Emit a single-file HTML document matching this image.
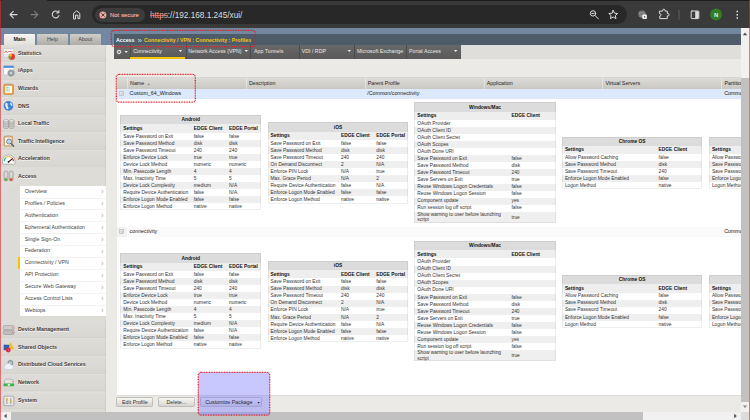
<!DOCTYPE html><html><head><meta charset="utf-8"><title>BIG-IP - Connectivity Profiles</title><style>
*{box-sizing:border-box;margin:0;padding:0}
html,body{width:750px;height:420px;overflow:hidden;background:#ebeae6}
body{font-family:"Liberation Sans",sans-serif;font-size:5.3px;color:#222;position:relative}
.abs{position:absolute}
#root{position:absolute;left:0;top:0;width:750px;height:420px;}
#toolbar{left:0;top:0;width:750px;height:28.3px;background:#3a3a3b}
#topstrip{left:46.5px;top:0;width:703.5px;height:1.2px;background:#1d1e20}
#topstrip0{left:0;top:0;width:2px;height:1.2px;background:#1d1e20}
#pill{left:92px;top:4.9px;width:535px;height:19.4px;border-radius:9.7px;background:#282828}
#chip{left:95.2px;top:8px;width:49.5px;height:14px;border-radius:7px;background:#3c3c3c}
#chiptxt{left:110px;top:12.3px;font-size:5.95px;line-height:7px;color:#f0a59c;-webkit-text-stroke:0.15px #f0a59c;white-space:nowrap}
#url{left:150px;top:10.4px;font-size:8.23px;line-height:11px;color:#dedede;white-space:nowrap}
#url s{color:#e79b93;text-decoration:line-through;text-decoration-color:#dc6f66;text-decoration-thickness:0.7px}
#band1{left:0;top:28.3px;width:741px;height:5.7px;background:#73889f}
#band2{left:113.6px;top:34px;width:627.4px;height:11px;background:#4e5b69}
#bandL{left:0;top:34px;width:114px;height:11px;background:#7188a4}
.tab{top:34.3px;height:10.7px;font-size:5.3px;line-height:10.4px;text-align:center;color:#444;border-radius:1px 1px 0 0}
#tabMain{left:4px;width:31px;background:linear-gradient(#f3f2ef,#e2e1dc);border-top:1px solid #fafaf8;line-height:9.6px;font-weight:bold;color:#222}
#tabHelp{left:37.1px;width:30.6px;background:linear-gradient(#cfcec9,#adaca7)}
#tabAbout{left:70px;width:30.5px;background:linear-gradient(#cfcec9,#adaca7)}
#sidebar{left:0;top:45px;width:105.6px;height:367px;background:#dcdbd6}
#sbedge{left:105px;top:45px;width:1px;height:367px;background:rgba(0,0,0,0.05)}
.sitem{left:0;width:105.6px;height:17.6px;background:linear-gradient(#e1e0dc 0,#dedcd8 8%,#d8d7d2 90%,#d3d2cd 100%)}
.sitem span{position:absolute;left:18px;top:5.4px;font-weight:bold;font-size:5.3px;line-height:7px;color:#404040;white-space:nowrap;text-shadow:0 0.5px 0 rgba(255,255,255,.8)}
.sicon{position:absolute;left:3.4px;top:3px;width:11.6px;height:11.6px;overflow:visible}
#submenu{left:20.2px;top:185.9px;width:85.4px;height:130.2px;background:#fff}
.sub{position:absolute;left:0;width:85.4px;height:12.7px;border-bottom:1px solid #f3f3f3;font-size:5.3px;line-height:11.8px;color:#444;padding-left:4.5px;white-space:nowrap}
.sub i{position:absolute;right:2.2px;top:0.3px;font-style:normal;color:#a2a2a2;font-size:6.8px}
#nav{left:113.6px;top:45px;width:347.4px;height:13.8px;background:linear-gradient(#686868,#595959)}
#navrest{left:461px;top:45px;width:280px;height:13.8px;background:#dfdedb}
.nv{position:absolute;top:0;height:13.8px;font-size:5.27px;line-height:12.6px;color:#e9e9e9;white-space:nowrap}
.nvd{position:absolute;top:0;width:0.8px;height:13.8px;background:#4c4c4c}
.nva{position:absolute;top:4.7px;width:3.8px;height:2.3px;background:#f0f0f0;clip-path:polygon(0 0,100% 0,50% 100%)}
#crumb{left:116px;top:36.7px;font-size:5.27px;line-height:7px;font-weight:bold;color:#fff;white-space:nowrap}
#crumb b{color:#f3c70f}
.red{overflow:visible}
#panel{left:116.7px;top:77px;width:624.3px;height:317.7px;background:#fff}
#thead{left:117.3px;top:77px;width:623.7px;height:11.8px;background:linear-gradient(#dcdbd7,#c8c7c2);border-top:1px solid #d7d6d2}
.th{position:absolute;top:0;height:11.3px;font-size:5.3px;line-height:11.4px;color:#222;padding-left:2.1px;border-left:1px solid rgba(255,255,255,0.4);white-space:nowrap}
#row1{left:117.3px;top:88.8px;width:623.7px;height:10px;background:#dbe9fb}
#row2{left:117.3px;top:227px;width:623.7px;height:9.6px;background:#fafafa}
.rt{position:absolute;font-size:5.3px;line-height:7px;white-space:nowrap;color:#222}
.cb{position:absolute;width:4.3px;height:4.3px;border:0.5px solid #a6a6a6;box-shadow:inset 0.6px 0.6px 0 #fff;background:linear-gradient(#fdfdfd,#d9d9d9);border-radius:0.5px}
table.t{position:absolute;border-collapse:collapse;font-size:4.85px;line-height:5.4px;color:#333;table-layout:fixed}
table.t td,table.t th{padding:0 0 0 2.9px;text-align:left;white-space:nowrap;overflow:hidden;vertical-align:middle}
table.t tr.ti th{height:9.3px;background:#dcdcdc;text-align:center;color:#111;padding:0.8px 0 0 0}
table.t tr.hd th{height:8.4px;background:#eeeeee;color:#111}
table.t tr.r td{height:7.05px}
table.t tr.e td{background:#efefef}
table.t tr.r2 td{height:11.1px;white-space:normal;line-height:5.4px}
.tb{border:1px solid rgba(0,0,0,0.065)}
.btn{position:absolute;top:397.3px;height:10px;border:0.5px solid #bfbeb9;border-radius:1.2px;background:linear-gradient(#f6f6f4,#d6d5d1);font-size:5.3px;line-height:9px;color:#333;text-align:center;white-space:nowrap}
#hl{left:198px;top:372.3px;width:72px;height:43.4px;background:rgba(128,128,255,0.43)}
#hscroll{left:0;top:412px;width:741px;height:8px;background:#f1f1f1}
#hthumb{left:11px;top:412px;width:631.5px;height:8px;background:#c1c1c1}
#vscroll{left:740.6px;top:28.3px;width:8.6px;height:383.7px;background:#f1f1f1}
#vthumb{left:741px;top:78px;width:8px;height:324px;background:#c1c1c1}
#corner{left:740.6px;top:412px;width:8.6px;height:8px;background:#dcdcdc}
#redL{left:0;top:0;width:1.2px;height:420px;background:rgba(215,40,50,0.6)}
#redR{left:749px;top:0;width:1px;height:420px;background:rgba(215,40,50,0.6)}
</style></head><body><div id="root">
<div id="toolbar" class="abs"></div><div id="topstrip" class="abs"></div><div id="topstrip0" class="abs"></div>
<div id="pill" class="abs"></div><div id="chip" class="abs"></div>
<div id="chiptxt" class="abs">Not secure</div>
<div id="url" class="abs"><s>https</s>://192.168.1.245/xui/</div>
<svg class="abs" style="left:0;top:0" width="750" height="28" viewBox="0 0 750 28" fill="none" stroke-linecap="round" stroke-linejoin="round">
<g stroke="#dcdcdc" stroke-width="1.1">
<path d="M17 14.6H10.2M13.3 11.3L10 14.6L13.3 17.9"/>
<path d="M58.4 12.4A3.4 3.4 0 1 0 58.9 15.6"/><path d="M58.9 10.6V12.9H56.6" stroke-width="1"/>
<path d="M73.6 18.6V13.4L76.7 10.8L79.8 13.4V18.6H77.9V15.2H75.5V18.6Z" stroke-width="1"/>
<circle cx="593" cy="13.4" r="2.7" stroke-width="1"/><path d="M595 15.5L598.4 18.9M591.8 13.4H594.2" stroke-width="1"/>
<path d="M613.2 10.4L614.5 13.2L617.6 13.5L615.3 15.6L616 18.6L613.2 17L610.4 18.6L611.1 15.6L608.8 13.5L611.9 13.2Z" stroke-width="1"/>
<path d="M659.8 11.1H662.7V10.3A1.15 1.15 0 0 1 665 10.3V11.1H667.3V13.6H668A1.15 1.15 0 0 1 668 15.9H667.3V18.6H659.8V16A1.2 1.2 0 0 0 659.8 13.6Z" stroke-width="1" stroke-linejoin="miter"/>
<rect x="691.2" y="11" width="7.6" height="7.6" rx="0.8" stroke-width="1"/>
</g>
<path d="M31 14.6H37.8M34.5 11.3L37.8 14.6L34.5 17.9" stroke="#7d7d7d" stroke-width="1.1"/>
<rect x="695.2" y="11.3" width="3.3" height="7" fill="#dcdcdc"/>
<circle cx="102.9" cy="14.9" r="3.5" fill="#f0a59c"/>
<path d="M101.7 13.7L104.3 16.3M104.3 13.7L101.7 16.3" stroke="#3c3c3c" stroke-width="0.9"/>
<circle cx="642" cy="14" r="3.6" fill="#8a8a8a"/><path d="M640 12.5C641 11 643 11 644 12.5M639.6 15C641 13.6 642.6 13.6 644 15" stroke="#5a5a5a" stroke-width="0.7"/>
<rect x="642.3" y="14.6" width="4.6" height="4.4" rx="0.9" fill="#f2f2f2"/><circle cx="644.6" cy="16.9" r="0.8" fill="#555"/>
<path d="M679 10.2V19.4" stroke="#6a6a6a" stroke-width="0.8"/>
<circle cx="716" cy="14.6" r="6" fill="#347d24"/>
<g fill="#dcdcdc"><rect x="736.5" y="10.7" width="1.5" height="1.6"/><rect x="736.5" y="14" width="1.5" height="1.6"/><rect x="736.5" y="17.2" width="1.5" height="1.6"/></g>
<text x="716" y="16.7" text-anchor="middle" font-family="Liberation Sans, sans-serif" font-weight="bold" font-size="5.8" fill="#e4efe0">N</text>
</svg>
<div id="band1" class="abs"></div><div id="bandL" class="abs"></div><div id="band2" class="abs"></div>
<div id="tabMain" class="abs tab">Main</div><div id="tabHelp" class="abs tab">Help</div><div id="tabAbout" class="abs tab">About</div>
<div id="sidebar" class="abs"></div>
<div class="abs sitem" style="top:44.50px"><svg class="sicon" viewBox="0 0 10.6 10.6"><rect x="0.4" y="0.6" width="9.4" height="8" rx="0.8" fill="#fbfbfb" stroke="#b5b5b5" stroke-width="0.5"/><path d="M1.4 4.6L2.6 2.4L3.6 4.2L5 3.2L8.8 3.4" stroke="#d33" stroke-width="0.6" fill="none"/><path d="M1.2 6.2H6M1.2 7.4H5" stroke="#9bd" stroke-width="0.4"/><circle cx="8" cy="7.9" r="2.9" fill="#e8312c"/><path d="M8 7.9L8 5A2.9 2.9 0 0 0 5.2 7.2Z" fill="#f2c21a"/><path d="M8 7.9L5.2 7.2A2.9 2.9 0 0 0 6.6 10.4Z" fill="#69b42e"/></svg><span>Statistics</span></div>
<div class="abs sitem" style="top:62.07px"><svg class="sicon" viewBox="0 0 10.6 10.6"><rect x="0.5" y="0.7" width="9.4" height="8.4" rx="0.8" fill="#fdfdfd" stroke="#a4a9b6" stroke-width="0.5"/><rect x="0.5" y="0.7" width="9.4" height="1.9" fill="#4a8fd8"/><circle cx="7.3" cy="7.3" r="2.9" fill="#9aa2a8" stroke="#868e94" stroke-width="0.8" stroke-dasharray="1 0.6"/><circle cx="7.3" cy="7.3" r="1" fill="#dfe3e6"/></svg><span>iApps</span></div>
<div class="abs sitem" style="top:79.64px"><svg class="sicon" viewBox="0 0 10.6 10.6"><rect x="0.6" y="1.2" width="9" height="9.2" rx="1.2" fill="#e9a14a" stroke="#c47d27" stroke-width="0.5"/><rect x="2" y="2.6" width="6.2" height="6.6" fill="#fbfbf6"/><rect x="3.4" y="0.4" width="3.4" height="1.8" rx="0.5" fill="#aaa"/><path d="M3 4H5M3 5.6H5M3 7.2H5" stroke="#5a5" stroke-width="0.6"/><path d="M5.8 3.4V8.4" stroke="#bbb" stroke-width="0.4"/></svg><span>Wizards</span></div>
<div class="abs sitem" style="top:97.21px"><svg class="sicon" viewBox="0 0 10.6 10.6"><circle cx="5" cy="5.4" r="4.4" fill="#3f84d6"/><path d="M2.4 3C3.8 2 4.8 3.2 4.2 4.6C3.6 6 5.2 6 5 7.6C4.8 9 3.4 8.8 3 7.4C2.6 6 1.4 5.6 2.4 3Z" fill="#e9f1fb"/><path d="M6.4 2.2C7.8 2.4 8.8 3.8 8.6 5.2C7.6 5.4 6.6 4.6 6.4 2.2Z" fill="#e9f1fb"/></svg><span>DNS</span></div>
<div class="abs sitem" style="top:114.78px"><svg class="sicon" viewBox="0 0 10.6 10.6"><g stroke="#8e8d89" stroke-width="0.45"><path d="M0.5 2.6V8.6C0.5 10 5.1 10 5.1 8.6V2.6" fill="#cfcecb"/><ellipse cx="2.8" cy="2.6" rx="2.3" ry="1.2" fill="#e6e5e2"/><path d="M5.5 2.6V8.6C5.5 10 10.1 10 10.1 8.6V2.6" fill="#cfcecb"/><ellipse cx="7.8" cy="2.6" rx="2.3" ry="1.2" fill="#e6e5e2"/><path d="M0.5 4.8C0.5 6 5.1 6 5.1 4.8M0.5 6.8C0.5 8 5.1 8 5.1 6.8M5.5 4.8C5.5 6 10.1 6 10.1 4.8M5.5 6.8C5.5 8 10.1 8 10.1 6.8" fill="none"/></g></svg><span>Local Traffic</span></div>
<div class="abs sitem" style="top:132.35px"><svg class="sicon" viewBox="0 0 10.6 10.6"><rect x="0.8" y="1" width="8" height="9.2" rx="0.9" fill="#e0a565" stroke="#c98a48" stroke-width="0.4"/><rect x="1.8" y="2.2" width="6" height="7.2" fill="#fbf8f2"/><rect x="3.2" y="0.3" width="3.2" height="1.7" rx="0.5" fill="#b9b6b0"/><circle cx="5.6" cy="6" r="2.3" fill="#bcd6f0" stroke="#5f6f86" stroke-width="0.7"/><path d="M7.3 7.8L9.8 10.3" stroke="#4a5a75" stroke-width="1.1" stroke-linecap="round"/></svg><span>Traffic Intelligence</span></div>
<div class="abs sitem" style="top:149.92px"><svg class="sicon" viewBox="0 0 10.6 10.6"><path d="M-0.4 7.4A5.7 5.7 0 0 1 11 7.4V9.4Q11 10.2 10.2 10.2H0.4Q-0.4 10.2 -0.4 9.4Z" fill="#fbfbfa" stroke="#8f8e8a" stroke-width="0.55"/><path d="M1.2 7.6A4.2 4.2 0 0 1 2.6 4.4" stroke="#35b58a" stroke-width="1.1" fill="none"/><path d="M2.9 4.1A4.2 4.2 0 0 1 5.3 3.2" stroke="#b7cf35" stroke-width="1.1" fill="none"/><path d="M5.6 3.2A4.2 4.2 0 0 1 7.9 4.2" stroke="#f2b21d" stroke-width="1.1" fill="none"/><path d="M8.2 4.5A4.2 4.2 0 0 1 9.5 7.6" stroke="#e3352b" stroke-width="1.1" fill="none"/><path d="M4.9 8.2L8.2 5.6" stroke="#1d1d1d" stroke-width="0.95" stroke-linecap="round"/><circle cx="5" cy="8.1" r="0.8" fill="#1d1d1d"/></svg><span>Acceleration</span></div>
<div class="abs sitem" style="top:167.49px;background:#dddcd7;height:18.5px"><svg class="sicon" viewBox="0 0 10.6 10.6"><rect x="0.8" y="0.8" width="3.7" height="9.2" rx="1.7" fill="#cbcac6" stroke="#8f8e8a" stroke-width="0.45"/><rect x="5.6" y="0.8" width="3.7" height="9.2" rx="1.7" fill="#cbcac6" stroke="#8f8e8a" stroke-width="0.45"/><circle cx="2.65" cy="8.7" r="1.4" fill="#55b648"/><circle cx="7.45" cy="8.7" r="1.4" fill="#e4554a"/><rect x="2" y="2.2" width="1.3" height="4" rx="0.6" fill="#e3e2df"/><rect x="6.8" y="2.2" width="1.3" height="4" rx="0.6" fill="#e3e2df"/></svg><span>Access</span></div>
<div class="abs sitem" style="top:320.70px"><svg class="sicon" viewBox="0 0 10.6 10.6"><rect x="0.4" y="1.4" width="9.8" height="3.9" rx="1.1" fill="#cfcdc9" stroke="#8f8e8a" stroke-width="0.45"/><rect x="0.4" y="5.7" width="9.8" height="3.9" rx="1.1" fill="#bfbdb9" stroke="#8f8e8a" stroke-width="0.45"/><circle cx="8.7" cy="3.4" r="0.5" fill="#e55"/><circle cx="8.7" cy="7.7" r="0.5" fill="#e55"/></svg><span>Device Management</span></div>
<div class="abs sitem" style="top:338.40px"><svg class="sicon" viewBox="0 0 10.6 10.6"><path d="M7 1L10.2 7.6H3.8Z" fill="#f0bf2a"/><rect x="0.6" y="3.4" width="5" height="5" fill="#2f5fb3"/><circle cx="4.8" cy="8.2" r="2.2" fill="#e0263a"/><circle cx="4.8" cy="8.2" r="0.6" fill="#f6c"/></svg><span>Shared Objects</span></div>
<div class="abs sitem" style="top:356.10px"><svg class="sicon" viewBox="0 0 10.6 10.6"><circle cx="6.8" cy="3.6" r="2.6" fill="#8a9aa0"/><circle cx="6.8" cy="3.6" r="1.6" fill="#b9c6c8"/><path d="M2.6 9.6A2.2 2.2 0 0 1 2.6 5.4A2.8 2.8 0 0 1 7.6 5.6A2 2 0 0 1 8 9.6Z" fill="#eef1f8" stroke="#b9bfd0" stroke-width="0.4"/></svg><span>Distributed Cloud Services</span></div>
<div class="abs sitem" style="top:373.80px"><svg class="sicon" viewBox="0 0 10.6 10.6"><path d="M1.2 3.4C1.2 1.4 9.4 1.4 9.4 3.4V6.6H1.2Z" fill="#e4e3e0" stroke="#8f8e8a" stroke-width="0.45"/><rect x="0.3" y="6" width="10" height="2.4" rx="1.1" fill="#3fb44a"/><rect x="4.3" y="6.4" width="2" height="1.6" fill="#f4f4f4"/><circle cx="8.6" cy="4.2" r="0.45" fill="#e33"/></svg><span>Network</span></div>
<div class="abs sitem" style="top:391.50px"><svg class="sicon" viewBox="0 0 10.6 10.6"><rect x="0.6" y="1" width="9.4" height="8.8" rx="1.3" fill="#d9d8d4" stroke="#8f8e8a" stroke-width="0.5"/><rect x="1.5" y="1.9" width="7.6" height="7" rx="0.6" fill="#eceae6"/><path d="M3.5 2.8V8.2M7.1 2.8V8.2" stroke="#6d6d6d" stroke-width="0.6"/><rect x="2.7" y="3.2" width="1.6" height="1.7" fill="#e0b83a"/><rect x="6.3" y="4.8" width="1.6" height="1.7" fill="#e0b83a"/></svg><span>System</span></div>
<div id="sbedge" class="abs"></div>
<div id="submenu" class="abs">
<div class="sub" style="top:0.00px">Overview<i>&#8250;</i></div>
<div class="sub" style="top:11.92px">Profiles / Policies<i>&#8250;</i></div>
<div class="sub" style="top:23.84px">Authentication<i>&#8250;</i></div>
<div class="sub" style="top:35.76px">Ephemeral Authentication<i>&#8250;</i></div>
<div class="sub" style="top:47.68px">Single Sign-On<i>&#8250;</i></div>
<div class="sub" style="top:59.60px">Federation<i>&#8250;</i></div>
<div class="sub" style="top:71.52px"><b style="position:absolute;left:-2.4px;top:-0.4px;width:2.4px;height:12px;background:#f5c400"></b>Connectivity / VPN<i>&#8250;</i></div>
<div class="sub" style="top:83.44px">API Protection<i>&#8250;</i></div>
<div class="sub" style="top:95.36px">Secure Web Gateway<i>&#8250;</i></div>
<div class="sub" style="top:107.28px">Access Control Lists<i>&#8250;</i></div>
<div class="sub" style="top:119.20px"><u style="position:absolute;left:0;right:0;bottom:-2.3px;height:3px;background:#dcdbd6"></u>Webtops<i>&#8250;</i></div>
</div>
<div id="navrest" class="abs"></div><div id="nav" class="abs">
<svg style="position:absolute;left:2.4px;top:3.7px" width="6" height="6" viewBox="0 0 6 6"><circle cx="3" cy="3" r="1.7" fill="none" stroke="#e6e6e6" stroke-width="1.3" stroke-dasharray="0.9 0.45"/><circle cx="3" cy="3" r="1.5" fill="none" stroke="#e6e6e6" stroke-width="0.8"/></svg>
<div class="nva" style="left:10.9px;width:3.3px;height:2.1px;top:6px"></div>
<div class="nvd" style="left:16.2px"></div>
<div class="nv" style="left:19.7px">Connectivity</div>
<div class="nva" style="left:64.9px"></div>
<div class="nvd" style="left:72.4px"></div>
<div class="nv" style="left:74.7px">Network Access (VPN)</div>
<div class="nva" style="left:130.8px"></div>
<div class="nvd" style="left:136.4px"></div>
<div class="nv" style="left:140.4px">App Tunnels</div>
<div class="nvd" style="left:185.1px"></div>
<div class="nv" style="left:188.1px">VDI / RDP</div>
<div class="nva" style="left:233.8px"></div>
<div class="nvd" style="left:240.0px"></div>
<div class="nv" style="left:243.4px">Microsoft Exchange</div>
<div class="nvd" style="left:292.1px"></div>
<div class="nv" style="left:295.4px">Portal Access</div>
<div class="nva" style="left:340.2px"></div>
<div style="position:absolute;left:16.7px;top:11.5px;width:54.7px;height:2.3px;background:#f5c400"></div>
</div>
<div id="crumb" class="abs">Access<span style="color:#d5dbe2;position:absolute;left:21.6px;font-size:8px;top:0.2px;font-weight:normal">&#187;</span><b style="position:absolute;left:28px">Connectivity / VPN : Connectivity : Profiles</b></div>
<div id="panel" class="abs"></div><div class="abs" style="left:116.7px;top:394.7px;width:624.3px;height:1.3px;background:#dddcd8"></div>
<div id="thead" class="abs">
<div class="th" style="left:0.0px;width:9.7px;overflow:hidden;border-left:none"></div>
<div class="th" style="left:9.7px;width:118.8px;overflow:hidden">Name <span style="font-size:3.2px;color:#777;position:relative;top:-0.5px;left:1.2px">&#9650;</span></div>
<div class="th" style="left:128.5px;width:118.8px;overflow:hidden">Description</div>
<div class="th" style="left:247.3px;width:119.0px;overflow:hidden">Parent Profile</div>
<div class="th" style="left:366.3px;width:118.8px;overflow:hidden">Application</div>
<div class="th" style="left:485.1px;width:119.0px;overflow:hidden">Virtual Servers</div>
<div class="th" style="left:604.1px;width:19.6px;overflow:hidden">Partition / Path</div>
</div>
<div id="row1" class="abs"></div><div id="row2" class="abs"><div style="position:absolute;left:0;top:0;width:9.7px;height:9.6px;background:#f2f2f2"></div></div>
<svg class="abs" style="left:119.3px;top:91.2px" width="4.8" height="4.8" viewBox="0 0 4.8 4.8"><rect x="0" y="0" width="4.8" height="4.8" rx="0.7" fill="#bcbcbc"/><rect x="0.7" y="0.7" width="3.2" height="3.2" rx="0.3" fill="#ececec"/><rect x="1.6" y="1.6" width="2.4" height="2.4" fill="#d4d4d4"/></svg>
<svg class="abs" style="left:119.3px;top:229.4px" width="4.8" height="4.8" viewBox="0 0 4.8 4.8"><rect x="0" y="0" width="4.8" height="4.8" rx="0.7" fill="#bcbcbc"/><rect x="0.7" y="0.7" width="3.2" height="3.2" rx="0.3" fill="#ececec"/><rect x="1.6" y="1.6" width="2.4" height="2.4" fill="#d4d4d4"/></svg>
<div class="rt" style="left:129.6px;top:90px">Custom_64_Windows</div>
<div class="rt" style="left:367.3px;top:90px">/Common/connectivity</div>
<div class="rt" style="left:724.2px;top:90px;width:16.6px;overflow:hidden">Common</div>
<div class="rt" style="left:129.6px;top:228.3px">connectivity</div>
<div class="rt" style="left:724.2px;top:228.3px;width:16.6px;overflow:hidden">Common</div>
<table class="t" style="left:120.4px;top:115.0px;width:140.7px"><colgroup><col style="width:70.4px"><col style="width:35.3px"><col style="width:34.9px"></colgroup><tr class="ti"><th colspan="3">Android</th></tr><tr class="hd"><th>Settings</th><th>EDGE Client</th><th>EDGE Portal</th></tr><tr class="r"><td>Save Password on Exit</td><td>false</td><td>false</td></tr><tr class="r e"><td>Save Password Method</td><td>disk</td><td>disk</td></tr><tr class="r"><td>Save Password Timeout</td><td>240</td><td>240</td></tr><tr class="r e"><td>Enforce Device Lock</td><td>true</td><td>true</td></tr><tr class="r"><td>Device Lock Method</td><td>numeric</td><td>numeric</td></tr><tr class="r e"><td>Min. Passcode Length</td><td>4</td><td>4</td></tr><tr class="r"><td>Max. Inactivity Time</td><td>5</td><td>5</td></tr><tr class="r e"><td>Device Lock Complexity</td><td>medium</td><td>N/A</td></tr><tr class="r"><td>Require Device Authentication</td><td>false</td><td>N/A</td></tr><tr class="r e"><td>Enforce Logon Mode Enabled</td><td>false</td><td>false</td></tr><tr class="r"><td>Enforce Logon Method</td><td>native</td><td>native</td></tr></table><div class="abs tb" style="left:120.4px;top:115.0px;width:140.7px;height:95.25px"></div>
<table class="t" style="left:267.7px;top:122.4px;width:140.6px"><colgroup><col style="width:70.4px"><col style="width:35.3px"><col style="width:34.9px"></colgroup><tr class="ti"><th colspan="3">iOS</th></tr><tr class="hd"><th>Settings</th><th>EDGE Client</th><th>EDGE Portal</th></tr><tr class="r"><td>Save Password on Exit</td><td>false</td><td>false</td></tr><tr class="r e"><td>Save Password Method</td><td>disk</td><td>disk</td></tr><tr class="r"><td>Save Password Timeout</td><td>240</td><td>240</td></tr><tr class="r e"><td>On Demand Disconnect</td><td>2</td><td>N/A</td></tr><tr class="r"><td>Enforce PIN Lock</td><td>N/A</td><td>true</td></tr><tr class="r e"><td>Max. Grace Period</td><td>N/A</td><td>2</td></tr><tr class="r"><td>Require Device Authentication</td><td>false</td><td>N/A</td></tr><tr class="r e"><td>Enforce Logon Mode Enabled</td><td>false</td><td>false</td></tr><tr class="r"><td>Enforce Logon Method</td><td>native</td><td>native</td></tr></table><div class="abs tb" style="left:267.7px;top:122.4px;width:140.6px;height:81.15px"></div>
<table class="t" style="left:414.4px;top:102.4px;width:141.3px"><colgroup><col style="width:94.0px"><col style="width:47.0px"></colgroup><tr class="ti"><th colspan="2">Windows/Mac</th></tr><tr class="hd"><th>Settings</th><th>EDGE Client</th></tr><tr class="r"><td>OAuth Provider</td><td></td></tr><tr class="r e"><td>OAuth Client ID</td><td></td></tr><tr class="r"><td>OAuth Client Secret</td><td></td></tr><tr class="r e"><td>OAuth Scopes</td><td></td></tr><tr class="r"><td>OAuth Done URI</td><td></td></tr><tr class="r e"><td>Save Password on Exit</td><td>false</td></tr><tr class="r"><td>Save Password Method</td><td>disk</td></tr><tr class="r e"><td>Save Password Timeout</td><td>240</td></tr><tr class="r"><td>Save Servers on Exit</td><td>true</td></tr><tr class="r e"><td>Reuse Windows Logon Credentials</td><td>false</td></tr><tr class="r"><td>Reuse Windows Logon Session</td><td>false</td></tr><tr class="r e"><td>Component update</td><td>yes</td></tr><tr class="r"><td>Run session log off script</td><td>false</td></tr><tr class="r e r2"><td>Show warning to user before launching script</td><td>true</td></tr></table><div class="abs tb" style="left:414.4px;top:102.4px;width:141.3px;height:120.45px"></div>
<table class="t" style="left:562.0px;top:136.5px;width:140.4px"><colgroup><col style="width:93.7px"><col style="width:46.7px"></colgroup><tr class="ti"><th colspan="2">Chrome OS</th></tr><tr class="hd"><th>Settings</th><th>EDGE Client</th></tr><tr class="r"><td>Allow Password Caching</td><td>false</td></tr><tr class="r e"><td>Save Password Method</td><td>disk</td></tr><tr class="r"><td>Save Password Timeout</td><td>240</td></tr><tr class="r e"><td>Enforce Logon Mode Enabled</td><td>false</td></tr><tr class="r"><td>Logon Method</td><td>native</td></tr></table><div class="abs tb" style="left:562.0px;top:136.5px;width:140.4px;height:52.95px"></div>
<div class="abs" style="left:709.0px;top:136.5px;width:32.0px;height:60px;overflow:hidden"><table class="t" style="left:0;top:0;width:140.4px"><colgroup><col style="width:93.7px"><col style="width:46.7px"></colgroup><tr class="ti"><th colspan="2">Chrome OS</th></tr><tr class="hd"><th>Settings</th><th>EDGE Client</th></tr><tr class="r"><td>Allow Password Caching</td><td>false</td></tr><tr class="r e"><td>Save Password Method</td><td>disk</td></tr><tr class="r"><td>Save Password Timeout</td><td>240</td></tr><tr class="r e"><td>Enforce Logon Mode Enabled</td><td>false</td></tr><tr class="r"><td>Logon Method</td><td>native</td></tr></table><div class="abs tb" style="left:0.0px;top:0.0px;width:140.4px;height:52.95px"></div></div>
<table class="t" style="left:120.4px;top:253.3px;width:140.7px"><colgroup><col style="width:70.4px"><col style="width:35.3px"><col style="width:34.9px"></colgroup><tr class="ti"><th colspan="3">Android</th></tr><tr class="hd"><th>Settings</th><th>EDGE Client</th><th>EDGE Portal</th></tr><tr class="r"><td>Save Password on Exit</td><td>false</td><td>false</td></tr><tr class="r e"><td>Save Password Method</td><td>disk</td><td>disk</td></tr><tr class="r"><td>Save Password Timeout</td><td>240</td><td>240</td></tr><tr class="r e"><td>Enforce Device Lock</td><td>true</td><td>true</td></tr><tr class="r"><td>Device Lock Method</td><td>numeric</td><td>numeric</td></tr><tr class="r e"><td>Min. Passcode Length</td><td>4</td><td>4</td></tr><tr class="r"><td>Max. Inactivity Time</td><td>5</td><td>5</td></tr><tr class="r e"><td>Device Lock Complexity</td><td>medium</td><td>N/A</td></tr><tr class="r"><td>Require Device Authentication</td><td>false</td><td>N/A</td></tr><tr class="r e"><td>Enforce Logon Mode Enabled</td><td>false</td><td>false</td></tr><tr class="r"><td>Enforce Logon Method</td><td>native</td><td>native</td></tr></table><div class="abs tb" style="left:120.4px;top:253.3px;width:140.7px;height:95.25px"></div>
<table class="t" style="left:267.7px;top:260.8px;width:140.6px"><colgroup><col style="width:70.4px"><col style="width:35.3px"><col style="width:34.9px"></colgroup><tr class="ti"><th colspan="3">iOS</th></tr><tr class="hd"><th>Settings</th><th>EDGE Client</th><th>EDGE Portal</th></tr><tr class="r"><td>Save Password on Exit</td><td>false</td><td>false</td></tr><tr class="r e"><td>Save Password Method</td><td>disk</td><td>disk</td></tr><tr class="r"><td>Save Password Timeout</td><td>240</td><td>240</td></tr><tr class="r e"><td>On Demand Disconnect</td><td>2</td><td>N/A</td></tr><tr class="r"><td>Enforce PIN Lock</td><td>N/A</td><td>true</td></tr><tr class="r e"><td>Max. Grace Period</td><td>N/A</td><td>2</td></tr><tr class="r"><td>Require Device Authentication</td><td>false</td><td>N/A</td></tr><tr class="r e"><td>Enforce Logon Mode Enabled</td><td>false</td><td>false</td></tr><tr class="r"><td>Enforce Logon Method</td><td>native</td><td>native</td></tr></table><div class="abs tb" style="left:267.7px;top:260.8px;width:140.6px;height:81.15px"></div>
<table class="t" style="left:414.4px;top:240.8px;width:141.3px"><colgroup><col style="width:94.0px"><col style="width:47.0px"></colgroup><tr class="ti"><th colspan="2">Windows/Mac</th></tr><tr class="hd"><th>Settings</th><th>EDGE Client</th></tr><tr class="r"><td>OAuth Provider</td><td></td></tr><tr class="r e"><td>OAuth Client ID</td><td></td></tr><tr class="r"><td>OAuth Client Secret</td><td></td></tr><tr class="r e"><td>OAuth Scopes</td><td></td></tr><tr class="r"><td>OAuth Done URI</td><td></td></tr><tr class="r e"><td>Save Password on Exit</td><td>false</td></tr><tr class="r"><td>Save Password Method</td><td>disk</td></tr><tr class="r e"><td>Save Password Timeout</td><td>240</td></tr><tr class="r"><td>Save Servers on Exit</td><td>true</td></tr><tr class="r e"><td>Reuse Windows Logon Credentials</td><td>false</td></tr><tr class="r"><td>Reuse Windows Logon Session</td><td>false</td></tr><tr class="r e"><td>Component update</td><td>yes</td></tr><tr class="r"><td>Run session log off script</td><td>false</td></tr><tr class="r e r2"><td>Show warning to user before launching script</td><td>true</td></tr></table><div class="abs tb" style="left:414.4px;top:240.8px;width:141.3px;height:120.45px"></div>
<table class="t" style="left:562.0px;top:274.9px;width:140.4px"><colgroup><col style="width:93.7px"><col style="width:46.7px"></colgroup><tr class="ti"><th colspan="2">Chrome OS</th></tr><tr class="hd"><th>Settings</th><th>EDGE Client</th></tr><tr class="r"><td>Allow Password Caching</td><td>false</td></tr><tr class="r e"><td>Save Password Method</td><td>disk</td></tr><tr class="r"><td>Save Password Timeout</td><td>240</td></tr><tr class="r e"><td>Enforce Logon Mode Enabled</td><td>false</td></tr><tr class="r"><td>Logon Method</td><td>native</td></tr></table><div class="abs tb" style="left:562.0px;top:274.9px;width:140.4px;height:52.95px"></div>
<div class="abs" style="left:709.0px;top:274.9px;width:32.0px;height:60px;overflow:hidden"><table class="t" style="left:0;top:0;width:140.4px"><colgroup><col style="width:93.7px"><col style="width:46.7px"></colgroup><tr class="ti"><th colspan="2">Chrome OS</th></tr><tr class="hd"><th>Settings</th><th>EDGE Client</th></tr><tr class="r"><td>Allow Password Caching</td><td>false</td></tr><tr class="r e"><td>Save Password Method</td><td>disk</td></tr><tr class="r"><td>Save Password Timeout</td><td>240</td></tr><tr class="r e"><td>Enforce Logon Mode Enabled</td><td>false</td></tr><tr class="r"><td>Logon Method</td><td>native</td></tr></table><div class="abs tb" style="left:0.0px;top:0.0px;width:140.4px;height:52.95px"></div></div>
<div class="btn" style="left:116.3px;width:37.1px">Edit Profile</div>
<div class="btn" style="left:158px;width:36.7px">Delete...</div>
<div class="btn" style="left:200px;width:62.3px"></div>
<div id="hscroll" class="abs"></div><div id="hthumb" class="abs"></div>
<div id="vscroll" class="abs"></div><div id="vthumb" class="abs"></div><div id="corner" class="abs"></div>
<svg class="abs" style="left:0;top:0;pointer-events:none" width="750" height="420" viewBox="0 0 750 420">
<path d="M742.8 35.2L745 32.6L747.2 35.2Z" fill="#505050"/>
<path d="M742.8 405.4L745 408L747.2 405.4Z" fill="#8a8a8a"/>
<path d="M6.6 413.8L4 416L6.6 418.2Z" fill="#505050"/>
<path d="M734.2 413.8L736.8 416L734.2 418.2Z" fill="#505050"/>
</svg>
<svg class="abs red" style="left:110.3px;top:28.6px" width="146.6" height="18.9" viewBox="-1 -1 146.6 18.9"><rect x="0.3" y="0.3" width="144.00" height="16.30" rx="3" fill="none" stroke="#de1f2b" stroke-width="1.25" stroke-dasharray="0.95 0.7"/></svg>
<svg class="abs red" style="left:197px;top:371.3px" width="74" height="45.4" viewBox="-1 -1 74 45.4"><rect x="0.3" y="0.3" width="71.40" height="42.80" rx="2.6" fill="rgba(128,128,255,0.43)" stroke="#de1f2b" stroke-width="1.25" stroke-dasharray="0.95 0.7"/></svg>
<svg class="abs red" style="left:115.3px;top:73.3px" width="81.6" height="30.5" viewBox="-1 -1 81.6 30.5"><rect x="0.3" y="0.3" width="79.00" height="27.90" rx="2.6" fill="none" stroke="#de1f2b" stroke-width="1.25" stroke-dasharray="0.95 0.7"/></svg>
<div class="abs" style="left:205.3px;top:397.8px;font-size:5.3px;line-height:9px;color:#2a2a34;white-space:nowrap">Customize Package</div>
<div class="abs" style="left:257.1px;top:401.5px;width:3.2px;height:2px;background:#22222c;clip-path:polygon(0 0,100% 0,50% 100%)"></div>
<div id="redL" class="abs"></div><div id="redR" class="abs"></div>
</div></body></html>
